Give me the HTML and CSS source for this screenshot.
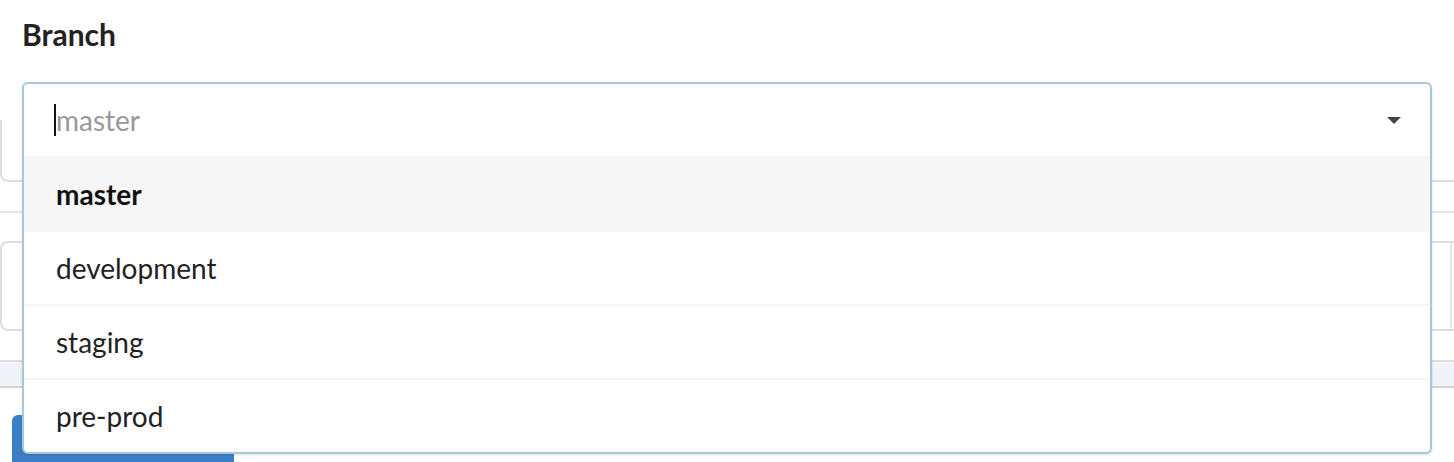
FILE: index.html
```html
<!DOCTYPE html>
<html>
<head>
	<title>Branch</title>
	<meta name="viewport" content="width=device-width, initial-scale=1.0" />
	<link rel="stylesheet" href="styles.css">
</head>
<body>
	<h2 class="label">Branch</h2>

	<div class="combo-anchor">
		<div class="combo">
			<div class="combo-input">
				<span class="text-cursor"></span>
				<span class="placeholder">master</span>
				<span class="caret"></span>
			</div>
			<ul class="options">
				<li class="option selected">master</li>
				<li class="option">development</li>
				<li class="option">staging</li>
				<li class="option">pre-prod</li>
			</ul>
		</div>
	</div>

	<!-- page content sitting under the open menu -->
	<div class="ghost-input"></div>
	<div class="ghost-rule"></div>
	<div class="ghost-box"><div class="ghost-cell"></div></div>
	<div class="ghost-band"></div>
	<div class="ghost-button"></div>
</body>
</html>
```

FILE: styles.css
```css
html, body {
	margin: 0;
	background: white;
	overflow: hidden;
}
body {
	font-family: Lato, "Open Sans", sans-serif;
	color: #222;
	width: 1454px;
	height: 462px;
}
.label {
	margin: 0;
	padding: 17px 22px 31px 22px;
	font-size: 30px;
	line-height: 34px;
	font-weight: bold;
	color: #222;
}
.combo-anchor {
	position: relative;
	margin: 0 22px;
	height: 0;
	z-index: 2;
}
.combo {
	position: absolute;
	top: 0;
	left: 0;
	right: 0;
	background: white;
	border: 2px solid #a3c9dd;
	border-radius: 6px;
	box-shadow: 0 1px 3px rgba(0, 0, 0, 0.12);
	overflow: hidden;
}
.combo-input {
	display: flex;
	align-items: center;
	height: 72px;
	padding: 0 29px 0 30px;
	font-size: 28px;
}
.text-cursor {
	width: 2px;
	height: 32px;
	background: #111;
}
.placeholder {
	flex: 1;
	color: #999;
}
.caret {
	width: 0;
	height: 0;
	border-left: 7px solid transparent;
	border-right: 7px solid transparent;
	border-top: 7px solid #444;
}
.options {
	list-style: none;
	margin: 0;
	padding: 0;
}
.option {
	box-sizing: border-box;
	height: 74px;
	line-height: 72px;
	padding: 0 32px;
	font-size: 28px;
	border-top: 2px solid #f5f5f5;
}
.option:first-child {
	border-top-color: #f6f6f6;
}
.selected {
	background: #f6f6f6;
	font-weight: bold;
	color: #111;
}
.ghost-input {
	margin-top: 38px;
	height: 60px;
	border: 2px solid #dedede;
	border-top: none;
	border-right: none;
	border-radius: 0 0 0 8px;
	margin-right: -20px;
}
.ghost-rule {
	margin-top: 29px;
	border-top: 2px solid #e6e6e6;
}
.ghost-box {
	margin-top: 28px;
	margin-right: -20px;
	height: 86px;
	border: 2px solid #dedede;
	border-right: none;
	border-radius: 8px 0 0 8px;
	display: flex;
	justify-content: flex-end;
}
.ghost-cell {
	width: 22px;
	border-left: 2px solid #e6e6e6;
}
.ghost-band {
	margin-top: 29px;
	height: 24px;
	background: #f2f3f8;
	border-top: 2px solid #dddddd;
	border-bottom: 2px solid #d2d2d2;
}
.ghost-button {
	margin: 27px 0 0 12px;
	width: 222px;
	height: 60px;
	background: #3d7fc7;
	border-radius: 6px;
}
```
